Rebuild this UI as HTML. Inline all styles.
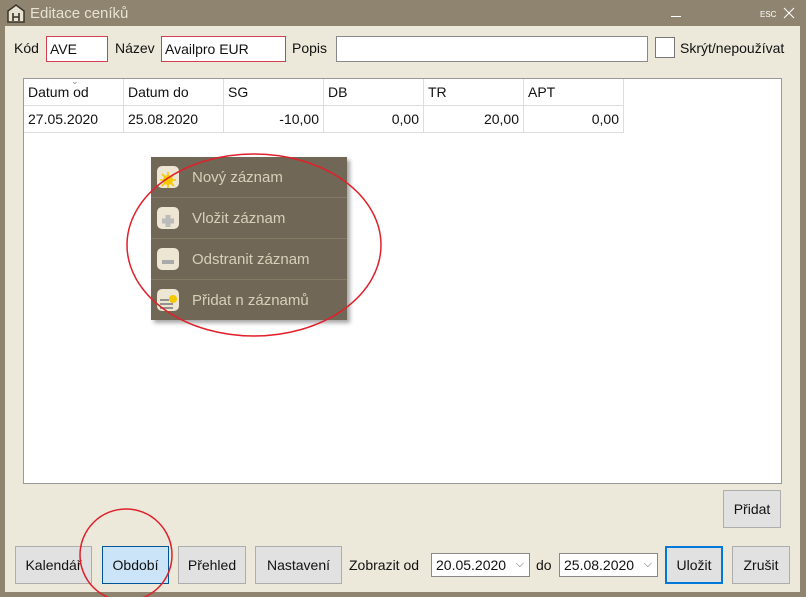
<!DOCTYPE html>
<html><head><meta charset="utf-8"><style>
*{box-sizing:border-box;margin:0;padding:0}
body{width:806px;height:597px;background:#8e8470;font-family:"Liberation Sans",sans-serif;font-size:14px;color:#111;position:relative;overflow:hidden}
.a{position:absolute}
.title{left:30px;top:5px;color:#e8e2d2;font-size:15px}
.client{left:5px;top:26px;width:795px;height:566px;background:#ece8da}
.inp{background:#fff;border:1px solid #888;height:26px;line-height:24px;padding-left:3px;font-size:14px}
.red{border-color:#d04050}
.lbl{font-size:14px}
.grid{left:23px;top:78px;width:759px;height:406px;background:#fff;border:1px solid #999}
.c{position:absolute;height:27px;line-height:27px;padding:0 4px;border-right:1px solid #ddd;border-bottom:1px solid #ddd;width:100px}
.btn{position:absolute;background:#e1e1e1;border:1px solid #adadad;text-align:center;font-size:14px;line-height:36px;height:38px}
.menu{left:151px;top:157px;width:196px;height:163px;background:#716756;box-shadow:3px 3px 4px rgba(0,0,0,.35)}
.mi{position:absolute;left:0;width:196px;height:41px;border-bottom:1px solid #857a64;color:#d8cfb8;font-size:15px;line-height:42px;padding-left:41px}
.ic{position:absolute;left:6px;top:9px;width:22px;height:22px;background:#ece6d2;border-radius:5px}
.sel{position:absolute;background:#fff;border:1px solid #888;height:24px;line-height:22px;padding-left:4px;font-size:14px}
.sel:after{content:"⌵";position:absolute;right:5px;top:-1px;color:#666;font-size:11px}
</style></head><body>
<svg class="a" style="left:7px;top:4px" width="18" height="19" viewBox="0 0 18 19"><path d="M1 18V7L9 1l8 6v11z" fill="#e8e2d2" stroke="#3a3428" stroke-width="1.5"/><path d="M6 17V9M12 17V9M6 13h6" stroke="#3a3428" stroke-width="1.6"/></svg>
<div class="a title">Editace ceníků</div>
<div class="a" style="left:671px;top:16px;width:10px;height:1px;background:#fff"></div>
<div class="a" style="left:760px;top:10px;color:#fff;font-size:8px">ESC</div>
<svg class="a" style="left:783px;top:7px" width="12" height="12"><path d="M1 1l10 10M11 1L1 11" stroke="#fff" stroke-width="1"/></svg>
<div class="a client"></div>
<div class="a lbl" style="left:14px;top:40px">Kód</div>
<div class="a inp red" style="left:46px;top:36px;width:62px">AVE</div>
<div class="a lbl" style="left:115px;top:40px">Název</div>
<div class="a inp red" style="left:161px;top:36px;width:125px">Availpro EUR</div>
<div class="a lbl" style="left:292px;top:40px">Popis</div>
<div class="a inp" style="left:336px;top:36px;width:312px"></div>
<div class="a" style="left:655px;top:37px;width:20px;height:21px;background:#fff;border:1px solid #777"></div>
<div class="a lbl" style="left:680px;top:40px">Skrýt/nepoužívat</div>
<div class="a grid">
<div class="c" style="left:0;top:0">Datum od</div><div class="c" style="left:100px;top:0">Datum do</div><div class="c" style="left:200px;top:0">SG</div><div class="c" style="left:300px;top:0">DB</div><div class="c" style="left:400px;top:0">TR</div><div class="c" style="left:500px;top:0">APT</div>
<div class="c" style="left:0;top:27px">27.05.2020</div><div class="c" style="left:100px;top:27px">25.08.2020</div><div class="c" style="left:200px;top:27px;text-align:right">-10,00</div><div class="c" style="left:300px;top:27px;text-align:right">0,00</div><div class="c" style="left:400px;top:27px;text-align:right">20,00</div><div class="c" style="left:500px;top:27px;text-align:right">0,00</div>
<div class="a" style="left:47px;top:-3px;color:#888;font-size:9px">⌄</div>
</div>
<div class="a menu">
<div class="mi" style="top:0"><div class="ic"><svg width="22" height="22"><circle cx="11" cy="11" r="5" fill="#f5c800"/><path d="M11 3v16M3 11h16M5 5l12 12M17 5L5 17" stroke="#f5c800" stroke-width="1.6"/></svg></div>Nový záznam</div>
<div class="mi" style="top:41px"><div class="ic"><svg width="22" height="22"><path d="M11 5v12M5 11h12" stroke="#bbb" stroke-width="5"/></svg></div>Vložit záznam</div>
<div class="mi" style="top:82px"><div class="ic"><svg width="22" height="22"><path d="M5 11h12" stroke="#aaa" stroke-width="4"/></svg></div>Odstranit záznam</div>
<div class="mi" style="top:123px;border:0"><div class="ic"><svg width="22" height="22"><path d="M3 8h9M3 12h13M3 16h13" stroke="#777" stroke-width="1.5"/><circle cx="16" cy="7" r="4" fill="#f5c800"/></svg></div>Přidat n záznamů</div>
</div>
<div class="btn" style="left:723px;top:490px;width:58px">Přidat</div>
<div class="btn" style="left:15px;top:546px;width:77px">Kalendář</div>
<div class="btn" style="left:102px;top:546px;width:67px;background:#cce4f7;border-color:#005499">Období</div>
<div class="btn" style="left:178px;top:546px;width:68px">Přehled</div>
<div class="btn" style="left:255px;top:546px;width:87px">Nastavení</div>
<div class="a lbl" style="left:349px;top:557px">Zobrazit od</div>
<div class="sel" style="left:431px;top:553px;width:99px">20.05.2020</div>
<div class="a lbl" style="left:536px;top:557px">do</div>
<div class="sel" style="left:559px;top:553px;width:99px">25.08.2020</div>
<div class="btn" style="left:665px;top:546px;width:58px;border:2px solid #0078d7;line-height:34px">Uložit</div>
<div class="btn" style="left:732px;top:546px;width:58px">Zrušit</div>
<svg class="a" style="left:0;top:0" width="806" height="597"><ellipse cx="254" cy="245" rx="127" ry="91" fill="none" stroke="#e0202a" stroke-width="1.5"/><circle cx="126" cy="555" r="46" fill="none" stroke="#e0202a" stroke-width="1.5"/></svg>
</body></html>
